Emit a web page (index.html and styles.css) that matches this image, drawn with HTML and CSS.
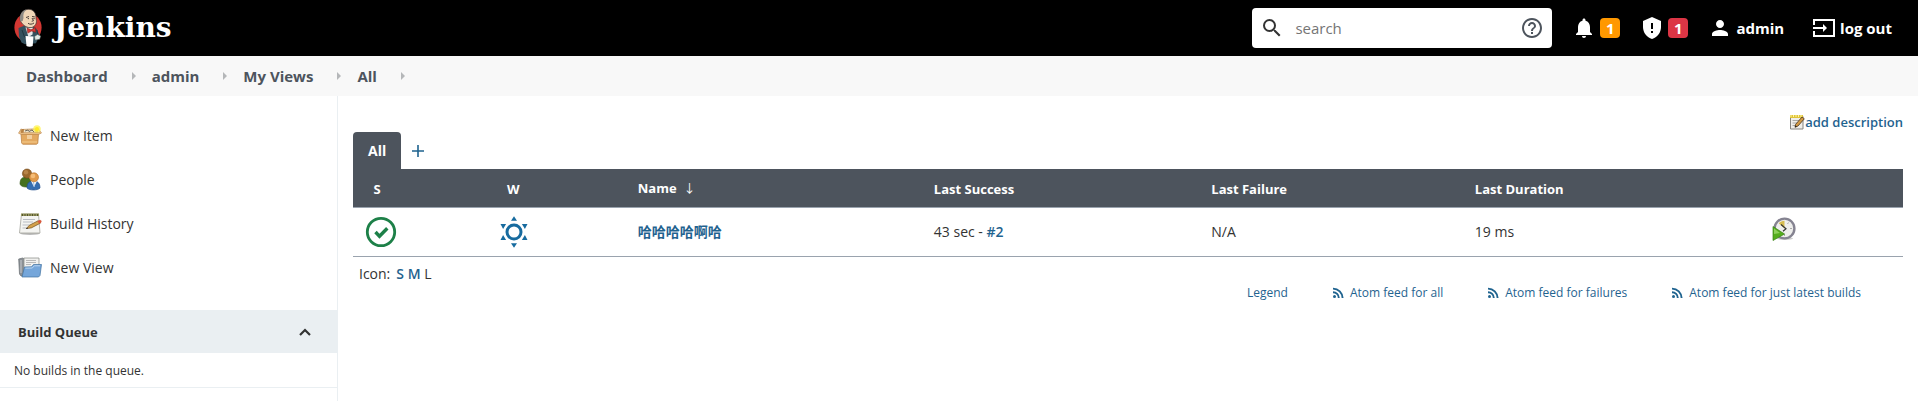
FILE: index.html
```html
<!DOCTYPE html>
<html lang="en">
<head>
<meta charset="utf-8">
<title>All [Jenkins]</title>
<meta name="viewport" content="width=device-width, initial-scale=1">
<link rel="stylesheet" href="styles.css">
</head>
<body>
<svg class="defs" aria-hidden="true">
  <symbol id="rss" viewBox="0 0 12 12">
    <circle cx="2.5" cy="9.6" r="1.5" fill="currentColor"/>
    <path d="M1 5.2a5.8 5.8 0 0 1 5.8 5.9M1 1.6a9.6 9.6 0 0 1 9.6 9.5" fill="none" stroke="currentColor" stroke-width="1.9"/>
  </symbol>
</svg>

<header class="page-header">
  <a class="brand" href="#">
    <svg class="brand-icon" viewBox="0 0 28 40" aria-hidden="true">
      <ellipse cx="14" cy="19.5" rx="13.6" ry="14.5" fill="#d33833"/>
      <path d="M9.5 18L4.5 20 5 28.5l2.5 6 3.5 1.8 11-1 3.5-8-3-6.5-3.5-2z" fill="#34515e"/>
      <path d="M11.5 19.5l3 9.5 4-2.500.5-7z" fill="#e8e8e8"/>
      <path d="M6.5 13C5 7.500 8 1.800 14 1.300c6-.3 8.300 4.500 8 9.500 1.500 4-.8 8-4.500 8.700-4 .6-8.500-1.500-11-6.500z" fill="#f0d6b7" stroke="#3b3432" stroke-width=".7"/>
      <path d="M6.500 13.500C4.800 8 7.500 2.500 12.500 1.500 9.500 4 9 7 9.500 10l-.8 3z" fill="#8d8a84"/>
      <path d="M12 9.500l3-1M18 8.500l2.800.4M18 10l1.500 2.700-1.800.6M14 15.300c2 1.400 4 1 6-.3" fill="none" stroke="#493d36" stroke-width="1"/>
      <circle cx="14.300" cy="10.600" r=".7" fill="#333"/><circle cx="20" cy="10.500" r=".7" fill="#333"/>
      <path d="M13 20l4 1.800 4.300-2.300.5 4.800-4.200-1.200-3.800 2z" fill="#d33833" stroke="#7c1715" stroke-width=".5"/>
      <path d="M8 22l2.500 7 6 1M23 22l1 6" fill="none" stroke="#1d3039" stroke-width=".8"/>
      <path d="M11.500 28l8 .5-.8 9.500c-2 .9-4.600.8-6.200 0z" fill="#fff"/>
      <path d="M20.500 28.500l3-2 3.200 1.600-1 3.200-4.500.8z" fill="#dfe8e4" stroke="#53625e" stroke-width=".5"/>
    </svg>
    <span class="brand-name">Jenkins</span>
  </a>
  <form class="search" role="search">
    <svg class="icon-24" viewBox="0 0 24 24" aria-hidden="true"><path fill="#333" d="M15.500 14h-.79l-.28-.27A6.470 6.470 0 0 0 16 9.500 6.500 6.500 0 1 0 9.500 16c1.610 0 3.090-.59 4.230-1.570l.27.28v.79l5 4.990L20.490 19l-4.990-5zm-6 0C7.010 14 5 11.990 5 9.500S7.010 5 9.500 5 14 7.010 14 9.500 11.990 14 9.500 14z"/></svg>
    <input class="search-input" type="text" placeholder="search" aria-label="search">
    <a class="search-help" href="#" aria-label="Search help"><svg class="icon-24" viewBox="0 0 24 24" aria-hidden="true"><path fill="#4d545d" d="M11 18h2v-2h-2v2zm1-16C6.480 2 2 6.480 2 12s4.480 10 10 10 10-4.480 10-10S17.520 2 12 2zm0 18c-4.410 0-8-3.590-8-8s3.590-8 8-8 8 3.590 8 8-3.590 8-8 8zm0-14c-2.210 0-4 1.790-4 4h2c0-1.100.9-2 2-2s2 .9 2 2c0 2-3 1.750-3 5h2c0-2.250 3-2.500 3-5 0-2.210-1.790-4-4-4z"/></svg></a>
  </form>
  <nav class="header-links" aria-label="Account">
    <a class="header-link" href="#" aria-label="Notifications"><svg class="icon-24" viewBox="0 0 24 24" aria-hidden="true"><path fill="#fff" d="M12 22c1.100 0 2-.9 2-2h-4c0 1.100.89 2 2 2zm6-6v-5c0-3.070-1.640-5.640-4.500-6.320V4c0-.83-.67-1.500-1.500-1.500s-1.500.67-1.500 1.500v.68C7.630 5.360 6 7.920 6 11v5l-2 2v1h16v-1l-2-2z"/></svg><span class="badge">1</span></a>
    <a class="header-link" href="#" aria-label="Security warnings"><svg class="icon-24" viewBox="0 0 24 24" aria-hidden="true"><path fill="#fff" d="M12 1L3 5v6c0 5.550 3.840 10.740 9 12 5.160-1.260 9-6.450 9-12V5z"/><path d="M12 7v6M12 15v2" stroke="#000" stroke-width="2"/></svg><span class="badge badge-red">1</span></a>
    <a class="header-link" href="#"><svg class="icon-24" viewBox="0 0 24 24" aria-hidden="true"><path fill="#fff" d="M12 12c2.210 0 4-1.790 4-4s-1.790-4-4-4-4 1.790-4 4 1.790 4 4 4zm0 2c-2.670 0-8 1.340-8 4v2h16v-2c0-2.660-5.330-4-8-4z"/></svg>admin</a>
    <a class="header-link logout" href="#"><svg class="icon-24" viewBox="0 0 24 24" aria-hidden="true"><path d="M2 9V4h20v16H2v-5" fill="none" stroke="#fff" stroke-width="2"/><path d="M1 12h12" stroke="#fff" stroke-width="2"/><path d="M11 8l4 4-4 4z" fill="#fff"/></svg>log out</a>
  </nav>
</header>

<nav class="breadcrumbs" aria-label="Breadcrumb">
  <ul class="crumbs">
    <li class="crumb"><a href="#">Dashboard</a></li>
    <li class="crumb"><a href="#">admin</a></li>
    <li class="crumb"><a href="#">My Views</a></li>
    <li class="crumb"><a href="#">All</a></li>
  </ul>
</nav>

<div class="page-body">
  <aside class="side-panel">
    <nav class="tasks" aria-label="Tasks">
      <a class="task" href="#">
        <svg class="icon-24" viewBox="0 0 24 24" aria-hidden="true">
          <path d="M3.500 5L19 4.500l2 5.500H2z" fill="#b98244"/><path d="M6 5.500h11l.5 3.500h-12z" fill="#eee2c8"/><path d="M7 7l3-1 1 1.500 3-1.500 2 2" stroke="#6e675c" fill="none"/>
          <path d="M3 10h17.500l-.7 9.300-1.300 1H5l-1.300-1z" fill="#e3a961" stroke="#b87c3e" stroke-width=".7"/>
          <path d="M3.200 4.800L.5 9.200l3 1.300h17l3-1.500-3-4 .8 3.700H3z" fill="#efc58d" stroke="#b98245" stroke-width=".6"/>
          <path d="M9 11h5v4H9z" fill="#f2cf9f"/><path d="M4 18h15" stroke="#f5cc8e"/>
          <circle cx="19" cy="5" r="3.800" fill="#fff35a" opacity=".8"/><circle cx="19" cy="5" r="2" fill="#ffed22"/>
        </svg>New Item</a>
      <a class="task" href="#">
        <svg class="icon-24" viewBox="0 0 24 24" aria-hidden="true">
          <path d="M2 16c0-5 2-7 6-7s5 3 5 7-10 4-11 0z" fill="#45701d" stroke="#315613" stroke-width=".6"/><circle cx="9" cy="5.600" r="4.600" fill="#9a682c" stroke="#734717" stroke-width=".6"/><circle cx="8" cy="4.200" r="2.200" fill="#b78548"/>
          <path d="M9 20c0-5 2-7 6.500-7s6.500 2.500 6.500 7c-2 2.600-11 2.600-13 0z" fill="#356db0" stroke="#244f8c" stroke-width=".7"/><path d="M13 13l3 6 3-6z" fill="#f6f8fa"/><path d="M15.500 14l.8 5" stroke="#9dbbdf"/>
          <circle cx="16" cy="9.300" r="4.500" fill="#e19a4b" stroke="#b66e27" stroke-width=".6"/><circle cx="15" cy="8" r="2.300" fill="#f5bd78"/>
        </svg>People</a>
      <a class="task" href="#">
        <svg class="icon-24" viewBox="0 0 24 24" aria-hidden="true">
          <ellipse cx="12" cy="21.500" rx="10" ry="1.500" fill="#bbb"/><path d="M3.500 2h17l1.500 19H1.500z" fill="#f4f4f1" stroke="#a5a59d" stroke-width=".8"/>
          <path d="M3 1.500h18v2.500H3z" fill="#98995e"/><path d="M4 3h16" stroke="#545431" stroke-width="2" stroke-dasharray="1 1.500"/>
          <path d="M5 7.500h12M5 10h10M4.500 13h7M4.500 16h5" stroke="#b9bdc3"/>
          <path d="M8.500 16.500l2.800-3.200 9-4.600 2 2.500-9 4.700z" fill="#d4a14b" stroke="#71501e" stroke-width=".7"/><path d="M19.500 9.200l2.500-1.400 1.700 1.200-.8 2-1.700.6z" fill="#d8583d"/><path d="M8 17l2-.5-1-1z" fill="#222"/>
        </svg>Build History</a>
      <a class="task" href="#">
        <svg class="icon-24" viewBox="0 0 24 24" aria-hidden="true">
          <path d="M.7 3l4-1 2 1v17H3L1.500 18z" fill="#8a8f94" stroke="#686e73" stroke-width=".7"/><path d="M3 4v13" stroke="#c7cbd0"/>
          <path d="M6 2h15v12H6z" fill="#f1f1ef" stroke="#929591" stroke-width=".8"/><path d="M8 4.500h10M8 6.500h10M8 8.500h5" stroke="#aaa" stroke-width=".8"/>
          <path d="M6.500 11l7-.2 2-2.300h8l-1.500 11-1.500 1.500H4z" fill="#75a6da" stroke="#41719f" stroke-width=".7"/><path d="M7.300 12.200l7-.2 2-2.200h5.700" fill="none" stroke="#b9d4f0"/>
        </svg>New View</a>
    </nav>
    <section class="queue">
      <div class="queue-header">
        <h2 class="queue-title">Build Queue</h2>
        <button class="collapse" type="button" aria-label="Collapse"><svg class="icon-16" viewBox="0 0 16 16" aria-hidden="true"><path d="M3 11l5-5 5 5" fill="none" stroke="#333" stroke-width="2.200"/></svg></button>
      </div>
      <p class="queue-empty">No builds in the queue.</p>
    </section>
  </aside>

  <main class="main-panel">
    <div class="description"><a class="description-link" href="#"><svg class="icon-16" viewBox="0 0 16 16" aria-hidden="true">
      <path d="M1.500 2.500h12.500v12.500H1.500z" fill="#f0eee9" stroke="#86847f"/><path d="M3.500 6.500h8M3.500 9h6M3.500 11.500h5" stroke="#aaa9a4"/>
      <path d="M1 1h13v3H1z" fill="#dfc43a"/><path d="M2 1v2M4.500 1v2M7 1v2M9.500 1v2M12 1v2" stroke="#fff4a2"/>
      <path d="M6.500 10.500L13 3l2.300 1.800L9 12l-3 1.300z" fill="#d49a44" stroke="#49351e" stroke-width=".8"/><path d="M6 13.300l.6-1.800 1.300 1z" fill="#111"/>
    </svg>add description</a></div>

    <div class="tabs">
      <a class="tab" href="#" aria-current="page">All</a>
      <a class="tab-add" href="#" aria-label="New View"><svg class="icon-12" viewBox="0 0 12 12" aria-hidden="true"><path d="M6 0v12M0 6h12" stroke="currentColor" stroke-width="1.600"/></svg></a>
    </div>

    <table class="jobs">
      <colgroup><col class="col-status"><col class="col-weather"><col class="col-name"><col class="col-success"><col class="col-failure"><col class="col-duration"><col class="col-action"></colgroup>
      <thead>
        <tr><th scope="col"><span class="status-label">S</span></th><th scope="col"><span class="weather-label">W</span></th><th scope="col">Name&nbsp; <span class="sort">↓</span></th><th scope="col">Last Success</th><th scope="col">Last Failure</th><th scope="col">Last Duration</th><td></td></tr>
      </thead>
      <tbody>
        <tr>
          <td><svg class="icon-32" viewBox="0 0 32 32" role="img" aria-label="Success"><circle cx="16" cy="16" r="13.700" fill="none" stroke="#1d8048" stroke-width="2.800"/><path d="M10.500 16l4 4.300 7.800-8" fill="none" stroke="#1d8048" stroke-width="3.400"/></svg></td>
          <td><svg class="icon-32" viewBox="0 0 32 32" role="img" aria-label="100%"><circle cx="16" cy="16" r="7" fill="none" stroke="#176b9f" stroke-width="3"/><g fill="#176b9f"><path d="M16 .3l3 4.500h-6zM16 31.700l3-4.500h-6zM2.500 8h5.600l-3 5.100zM29.500 8h-5.600l3 5.100zM2.500 24h5.600l-3-5.100zM29.500 24h-5.600l3-5.100z"/></g></svg></td>
          <td><a class="job-name" href="#">哈哈哈哈啊哈</a></td>
          <td>43 sec - <a class="build-link" href="#">#2</a></td>
          <td>N/A</td>
          <td>19 ms</td>
          <td><a class="schedule" href="#" aria-label="Schedule a Build"><svg class="icon-24" viewBox="0 0 24 24" aria-hidden="true">
            <ellipse cx="13" cy="21.500" rx="8" ry="1.500" fill="#ccc"/><circle cx="12.500" cy="11.500" r="9.900" fill="#eeeeec" stroke="#858391" stroke-width="2.400"/>
            <path d="M12.500 11.500L6.800 6.300c1.400-1.500 3.400-2.500 5.700-2.600z" fill="#d7bd52"/><path d="M9 7.500l5 4.200-3 2.600" fill="none" stroke="#343434" stroke-width="1.200"/><path d="M18 11.500h2M12.500 17v2M16.500 5.500l-1 1.500" stroke="#aaa"/>
            <path d="M1 9.500L12.500 17 1 23.500z" fill="#55ad1d" stroke="#388113" stroke-width=".7"/><path d="M2 11.500l6 4.500-6 1z" fill="#8fd15b"/>
          </svg></a></td>
        </tr>
      </tbody>
    </table>

    <div class="icon-sizes"><span>Icon:</span><span class="sizes"><a href="#">S</a> <a href="#">M</a> <span>L</span></span></div>
    <div class="feeds">
      <a class="feed" href="#">Legend</a>
      <a class="feed" href="#"><svg class="icon-12" aria-hidden="true"><use href="#rss"/></svg>Atom feed for all</a>
      <a class="feed" href="#"><svg class="icon-12" aria-hidden="true"><use href="#rss"/></svg>Atom feed for failures</a>
      <a class="feed" href="#"><svg class="icon-12" aria-hidden="true"><use href="#rss"/></svg>Atom feed for just latest builds</a>
    </div>
  </main>
</div>
</body>
</html>
```

FILE: styles.css
```css
* { box-sizing: border-box; }

body {
  margin: 0;
  min-height: 100vh;
  display: flex;
  flex-direction: column;
  background: #fff;
  color: #333;
  font: 14px/20px "Open Sans", "Noto Sans", "Noto Sans CJK SC", sans-serif;
}

a { color: #1f638f; text-decoration: none; }
svg { display: block; flex: none; }

.defs { position: absolute; width: 0; height: 0; }
.icon-12 { width: 12px; height: 12px; }
.icon-16 { width: 16px; height: 16px; }
.icon-24 { width: 24px; height: 24px; }
.icon-32 { width: 32px; height: 32px; }

.page-header {
  display: flex;
  align-items: center;
  height: 56px;
  padding: 0 26px 0 14px;
  background: #000;
}
.brand { display: flex; align-items: center; gap: 12px; margin-right: auto; color: #fff; }
.brand-icon { width: 28px; height: 40px; }
.brand-name { font: bold 28px/40px "DejaVu Serif", serif; }

.search {
  display: flex;
  align-items: center;
  width: 300px;
  height: 40px;
  padding: 0 8px;
  border-radius: 4px;
  background: #fff;
}
.search-input {
  flex: 1;
  min-width: 0;
  padding: 0 11px;
  border: 0;
  outline: 0;
  background: none;
  color: #333;
  font: 15px/24px "Open Sans", sans-serif;
}
.search-input::placeholder { color: #757575; }

.header-links { display: flex; gap: 20px; margin-left: 20px; }
.header-link {
  display: flex;
  align-items: center;
  gap: 4px;
  color: #fff;
  font-size: 15px;
  font-weight: 700;
}
.logout { margin-left: 8px; }
.badge {
  width: 20px;
  border-radius: 4px;
  background: #ff9800;
  line-height: 20px;
  text-align: center;
}
.badge-red { background: #dc3545; }

.breadcrumbs { background: #f8f8f8; }
.crumbs {
  display: flex;
  margin: 0;
  padding: 0 26px;
  list-style: none;
}
.crumb {
  display: flex;
  align-items: center;
  height: 40px;
  font-size: 15px;
  font-weight: 700;
}
.crumb a { color: #4d545d; }
.crumb::after {
  content: "";
  margin: 0 16px 0 24px;
  border: 4px solid transparent;
  border-left-color: #b5b7b9;
  border-right-width: 0;
}

.page-body { display: flex; flex: 1; }
.side-panel { flex: none; width: 338px; border-right: 1px solid #eaeff2; }
.tasks { display: flex; flex-direction: column; padding: 18px 0 20px 18px; }
.task {
  display: flex;
  align-items: center;
  gap: 8px;
  padding: 10px 0;
  color: #333;
  font-weight: 500;
}

.queue-header {
  display: flex;
  align-items: center;
  justify-content: space-between;
  height: 43px;
  padding: 0 24px 0 18px;
  background: #eaeff2;
}
.queue-title { margin: 0; font-size: 13px; line-height: 20px; }
.collapse { padding: 0; border: 0; background: none; }
.queue-empty {
  margin: 0;
  padding: 9px 14px 7px;
  border-bottom: 1px solid #eaeff2;
  font-size: 12px;
  line-height: 18px;
}

.main-panel { flex: 1; min-width: 0; padding: 16px 15px; }
.description { display: flex; justify-content: flex-end; }
.description-link { display: flex; align-items: center; font-size: 13px; font-weight: 600; }

.tabs { display: flex; align-items: center; }
.tab {
  padding: 9px 14px 8px;
  border-radius: 4px 4px 0 0;
  background: #4d545d;
  color: #fff;
  font-size: 14px;
  font-weight: 700;
}
.tab { padding: 9px 15px 8px; }
.tab-add { padding: 0 11px; }

.jobs { width: 100%; border-collapse: collapse; table-layout: fixed; }
.col-status { width: 8.6%; }
.col-weather { width: 9%; }
.col-name { width: 19.1%; }
.col-success { width: 17.9%; }
.col-failure { width: 17%; }
.col-duration { width: 19.2%; }
.col-action { width: 9.2%; }
.jobs th, .jobs td { padding: 0 12px; border-bottom: 1px solid #9aa3ae; text-align: left; }
.jobs thead { background: #4d545d; color: #fff; font-size: 13px; }
.jobs thead tr { height: 38px; }
.jobs thead th { padding-top: 2px; }
.jobs tbody tr { height: 49px; }
.status-label, .weather-label { display: inline-block; width: 24px; text-align: center; }
.weather-label { width: 30px; }
.sort { font-size: 12px; font-weight: 400; }
.job-name { font-weight: 600; }
.build-link { font-weight: 600; }
.schedule { display: inline-block; }

.icon-sizes { display: flex; gap: 6px; padding: 7px 6px 0; }
.sizes a { font-weight: 600; }
.feeds {
  display: flex;
  flex-wrap: wrap;
  justify-content: flex-end;
  gap: 44px;
  padding: 0 42px;
  font-size: 12px;
  line-height: 18px;
}
.feed { display: flex; align-items: center; gap: 6px; font-weight: 500; }
```
